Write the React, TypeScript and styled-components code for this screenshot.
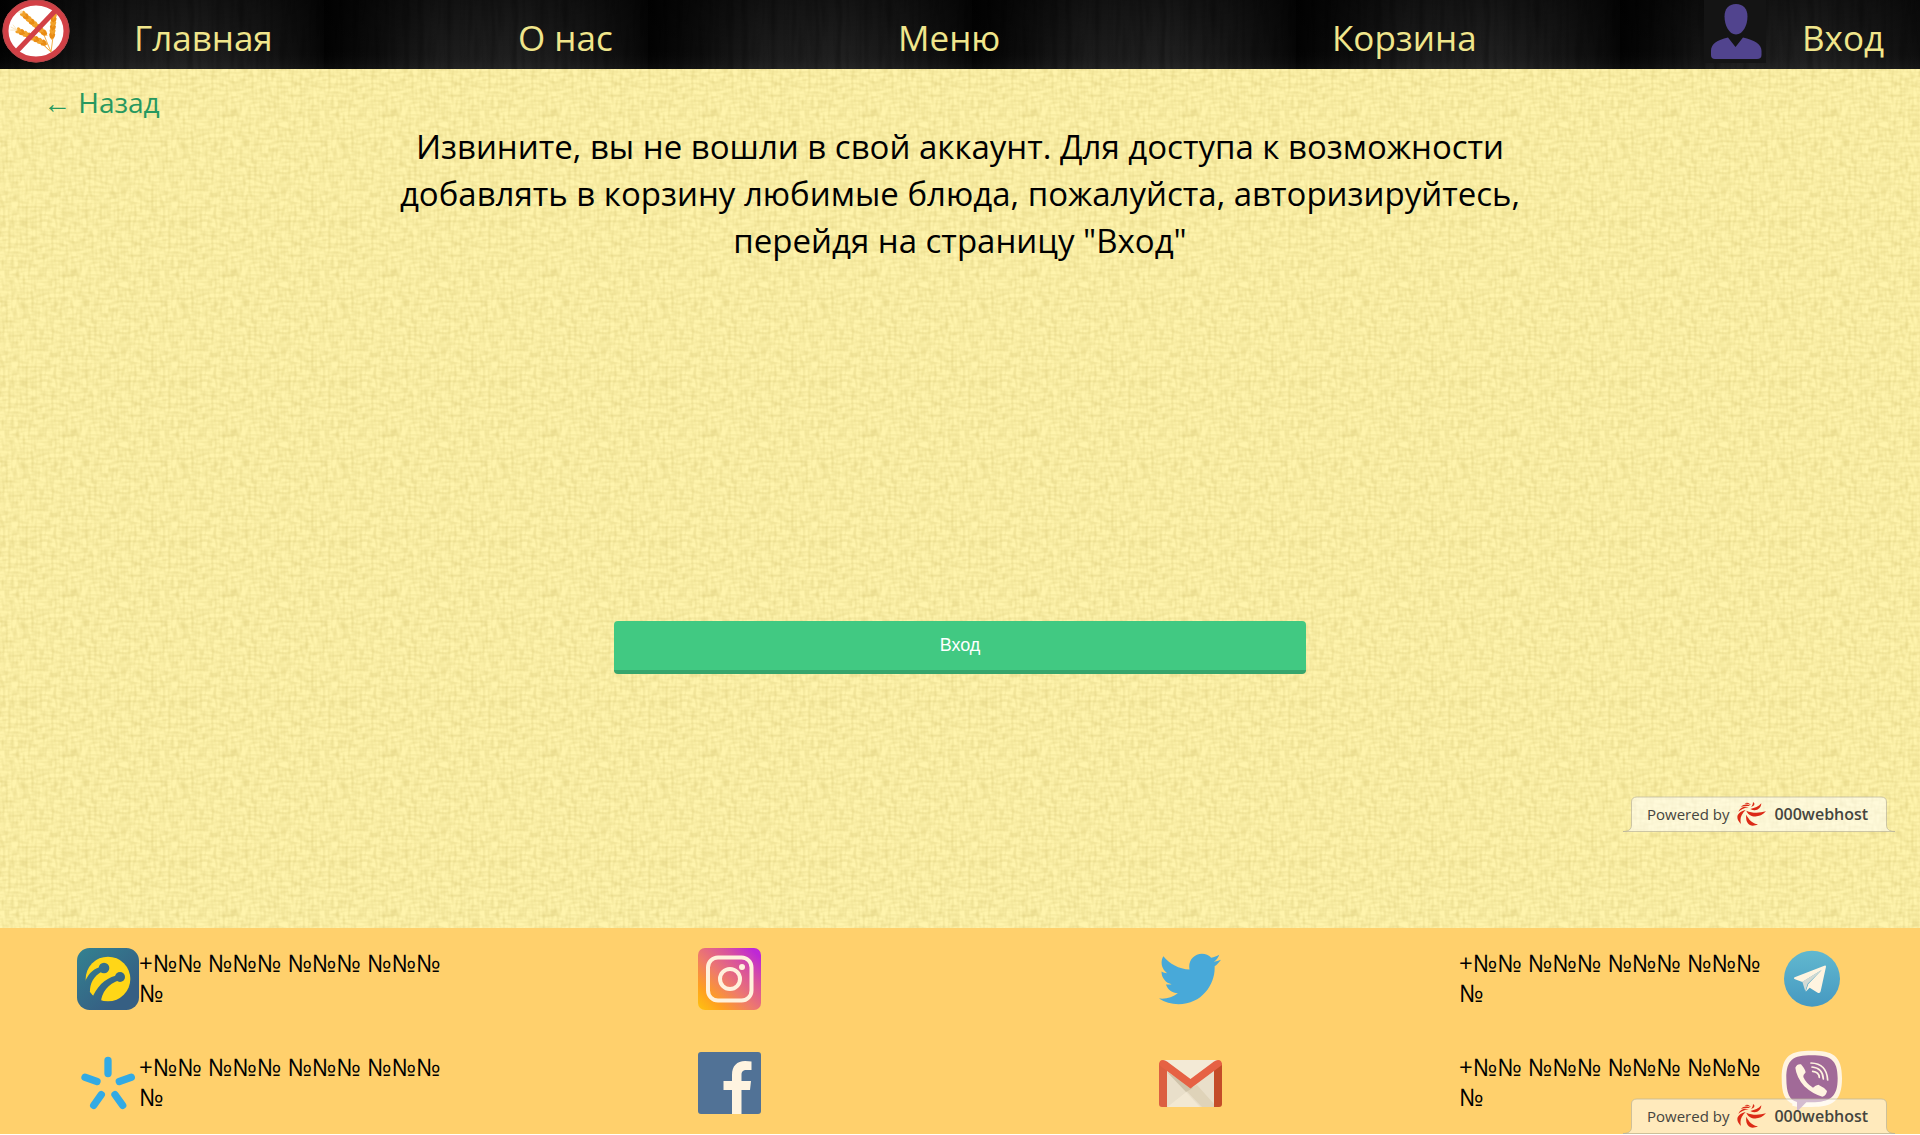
import React from "react";
import styled, { createGlobalStyle } from "styled-components";
import { FaTwitter } from "react-icons/fa";

const sans = `"Open Sans", "Noto Sans", sans-serif`;

const svgUrl = (svg: string) => `url("data:image/svg+xml,${encodeURIComponent(svg)}")`;

const canvasTexture = svgUrl(
  `<svg xmlns="http://www.w3.org/2000/svg" width="160" height="160">
  <filter id="v" x="0" y="0" width="100%" height="100%" color-interpolation-filters="sRGB">
    <feTurbulence type="fractalNoise" baseFrequency="0.35 0.1" numOctaves="1" seed="4" stitchTiles="stitch"/>
    <feColorMatrix values="0 0 0 0 .82  0 0 0 0 .75  0 0 0 0 .42  .8 0 0 0 -.32"/>
  </filter>
  <filter id="h" x="0" y="0" width="100%" height="100%" color-interpolation-filters="sRGB">
    <feTurbulence type="fractalNoise" baseFrequency="0.1 0.35" numOctaves="1" seed="9" stitchTiles="stitch"/>
    <feColorMatrix values="0 0 0 0 .82  0 0 0 0 .75  0 0 0 0 .42  .8 0 0 0 -.32"/>
  </filter>
  <rect width="160" height="160" filter="url(#v)"/><rect width="160" height="160" filter="url(#h)"/></svg>`
);

const woodTexture = svgUrl(
  `<svg xmlns="http://www.w3.org/2000/svg" width="324" height="69">
  <defs>
    <linearGradient id="g"><stop offset="0" stop-color="#020202"/><stop offset=".1" stop-color="#080808"/><stop offset=".35" stop-color="#1a1a1a"/><stop offset=".6" stop-color="#1e1e1e"/><stop offset=".8" stop-color="#161616"/><stop offset=".95" stop-color="#0b0b0b"/><stop offset="1" stop-color="#050505"/></linearGradient>
    <linearGradient id="s" x2="0" y2="1"><stop offset="0" stop-color="#000" stop-opacity=".35"/><stop offset=".7" stop-color="#000" stop-opacity="0"/><stop offset="1" stop-color="#fff" stop-opacity=".04"/></linearGradient>
  </defs>
  <filter id="w" x="0" y="0" width="100%" height="100%" color-interpolation-filters="sRGB">
    <feTurbulence type="fractalNoise" baseFrequency="0.14 0.02" numOctaves="2" seed="3" stitchTiles="stitch"/>
    <feColorMatrix values="0 0 0 0 0  0 0 0 0 0  0 0 0 0 0  .7 0 0 0 -.3"/>
  </filter>
  <rect width="324" height="69" fill="url(#g)"/><rect width="324" height="69" fill="url(#s)"/><rect width="324" height="69" filter="url(#w)"/></svg>`
);

const GlobalStyle = createGlobalStyle`
  *, *::before, *::after { box-sizing: border-box; }
  body { margin: 0; background: #fff; font-family: ${sans}; color: #000; }
  a { text-decoration: none; color: inherit; }
  svg { display: block; flex: none; }
`;

const Page = styled.div`
  min-height: calc(100vh - 1px);
  display: flex;
  flex-direction: column;
`;

const Header = styled.header`
  background: #101010 ${woodTexture} repeat-x;
`;

const Nav = styled.nav`
  display: grid;
  grid-template-columns: 134fr 384fr 380fr 434fr 372fr 216fr;
  align-items: start;
  height: 69px;
`;

const NavLink = styled.a`
  color: #f0e68c;
  font-size: 35px;
  line-height: 48px;
  padding-top: 14px;
  white-space: nowrap;
`;

const Account = styled.div`
  display: flex;
  gap: 36px;
`;

const AvatarBox = styled.span`
  background: #141414;
`;

const Main = styled.main`
  position: relative;
  flex: 1;
  background: #fff4ac ${canvasTexture};
`;

const BackLink = styled.a`
  display: inline-block;
  margin: 13px 0 1px 43px;
  color: #27985f;
  font-size: 28px;
  line-height: 40px;
`;

const Message = styled.p`
  width: 60%;
  margin: 0 auto;
  text-align: center;
  font-size: 33px;
  line-height: 47px;
`;

const LoginButton = styled.button`
  display: block;
  width: 36%;
  height: 53px;
  margin: 357px auto 254px;
  padding: 0 0 2px;
  border: 0;
  border-bottom: 4px solid #37a56c;
  border-radius: 4px;
  background: #41c982;
  color: #fff;
  font: 18px/46px "Liberation Sans", Arial, sans-serif;
`;

const Footer = styled.footer`
  position: relative;
  background: #ffd06c;
  padding: 20px 77px;
  display: grid;
  grid-template-columns: 621fr 461fr 300fr 384fr;
  row-gap: 42px;
`;

const Contact = styled.div<{ $end?: boolean }>`
  display: flex;
  align-items: flex-start;
  justify-content: ${(p) => (p.$end ? "space-between" : "flex-start")};
`;

const Phone = styled.span`
  width: 320px;
  font-size: 24px;
  line-height: 30px;
`;

const SocialLink = styled.a`
  display: flex;
  align-items: center;
  justify-content: center;
  width: 62px;
  height: 62px;
`;

const HostLink = styled.a<{ $bottom: number }>`
  position: absolute;
  right: 25px;
  bottom: ${(p) => p.$bottom}px;
  width: 272px;
  height: 36px;
  padding: 0 24px;
  display: flex;
  align-items: center;
  gap: 8px;
  color: #45453e;
  line-height: 36px;
  white-space: nowrap;
`;

const HostPlate = styled.svg`
  position: absolute;
  inset: 0;
`;

const HostText = styled.span<{ $brand?: boolean }>`
  position: relative;
  font-size: ${(p) => (p.$brand ? 16 : 15)}px;
  font-weight: ${(p) => (p.$brand ? 600 : 400)};
`;

const HostSwirl = styled.svg`
  position: relative;
`;

function WheatEar({ x, y, angle, count }: { x: number; y: number; angle: number; count: number }) {
  return (
    <g transform={`translate(${x} ${y}) rotate(${angle})`}>
      <path d={`M0 0H${count * 4 + 2}`} stroke="#f3b04a" strokeWidth="1" />
      <path d="M0 0l-6-3M0 0l-7 0M0 0l-6 3" stroke="#f8dfb0" strokeWidth=".7" />
      {Array.from({ length: count }, (_, i) => (
        <g key={i} fill={i % 2 ? "#e98c14" : "#f2a22a"}>
          <ellipse cx={i * 4 + 2} cy="-1.2" rx="3" ry="1.5" transform={`rotate(20 ${i * 4 + 2} -1.2)`} />
          <ellipse cx={i * 4 + 2} cy="1.2" rx="3" ry="1.5" transform={`rotate(-20 ${i * 4 + 2} 1.2)`} />
        </g>
      ))}
    </g>
  );
}

const Logo = () => (
  <svg width="72" height="64" viewBox="0 0 72 64" fill="none" role="img" aria-label="Без глютена">
    <ellipse cx="36" cy="31" rx="30" ry="28" fill="#fff" />
    <path d="M44 35L51 52M44 45L51 52M53 37L51 52M38 40L51 52" stroke="#f3b04a" />
    <WheatEar x={22} y={13} angle={42} count={8} />
    <WheatEar x={17} y={30} angle={26} count={8} />
    <WheatEar x={54} y={14} angle={95} count={6} />
    <path d="M55 11L17 51" stroke="#d24046" strokeWidth="5" />
    <ellipse cx="36" cy="31" rx="30.5" ry="28.5" stroke="#d24046" strokeWidth="6" />
    <ellipse cx="36" cy="31" rx="33" ry="31" stroke="#b5494c" strokeWidth="1" />
  </svg>
);

const UserIcon = () => (
  <svg width="62" height="63" viewBox="0 0 62 63" fill="#51448e" aria-hidden="true">
    <path d="M32 4C24.500 4 20.500 9 20.500 16.500C20.500 25 25 34.500 32 34.500C39 34.500 43.500 25 43.500 16.500C43.500 9 39.500 4 32 4Z" />
    <path d="M24 37.500L31.500 47L39 37.500C50 40 57.500 44 57.500 51V55Q57.500 59 53 59H11Q7 59 7 55V51C7 44 13 40 24 37.500Z" />
  </svg>
);

const LifecellIcon = () => (
  <svg width="62" height="62" viewBox="0 0 186 186" aria-hidden="true">
    <defs>
      <linearGradient id="life" gradientUnits="userSpaceOnUse" x1="0" y1="0" x2="130" y2="150">
        <stop offset="0" stopColor="#338291" />
        <stop offset="1" stopColor="#365f83" />
      </linearGradient>
    </defs>
    <rect width="186" height="186" rx="38" fill="url(#life)" />
    <circle cx="93" cy="93" r="67" fill="#ffd617" />
    <g fill="url(#life)">
      <circle cx="81" cy="60" r="16" />
      <path d="M76 56C52 58 36 76 26 96L18 120L39 132C38 108 50 84 76 70Z" />
      <circle cx="129" cy="87" r="15" />
      <path d="M128 82C94 84 66 108 49 142L44 165L72 162C74 134 92 108 128 96Z" />
    </g>
  </svg>
);

const KyivstarIcon = () => (
  <svg width="62" height="62" viewBox="0 0 62 62" stroke="#32aae4" strokeWidth="7.300" strokeLinecap="round" aria-hidden="true">
    <path d="M31 8.500V21.500M8 25.300L20 29.500M42.300 29.500L54.300 25.300M24.300 42.700L16.700 53.300M38 42.700L45.700 53.300" />
  </svg>
);

const InstagramIcon = () => (
  <svg width="63" height="62" viewBox="0 0 63 62" fill="none" aria-hidden="true">
    <defs>
      <linearGradient id="insta" x1="0" y1="1" x2="1" y2="0">
        <stop offset="0" stopColor="#ffc40f" />
        <stop offset=".2" stopColor="#ffa01f" />
        <stop offset=".45" stopColor="#ee7a6c" />
        <stop offset=".7" stopColor="#d9539c" />
        <stop offset=".92" stopColor="#be28d6" />
      </linearGradient>
    </defs>
    <rect width="63" height="62" rx="7" fill="url(#insta)" />
    <g stroke="#fff1dc" strokeWidth="4">
      <rect x="10" y="9.500" width="43.500" height="43" rx="10" />
      <circle cx="32" cy="31" r="10" />
    </g>
    <circle cx="44" cy="19" r="3" fill="#fff1dc" />
  </svg>
);

const FacebookIcon = () => (
  <svg width="63" height="62" viewBox="0 0 63 62" aria-hidden="true">
    <rect width="63" height="62" rx="3" fill="#517296" />
    <path d="M34 62V38H25.500V29H34V23C34 14 39 9 47 9Q51 9 53.500 9.500V18H48.500C45 18 43.500 19.500 43.500 23V29H53L52 38H43.500V62Z" fill="#fff4e0" />
  </svg>
);

const GmailIcon = () => (
  <svg width="63" height="62" viewBox="0 0 63 62" aria-hidden="true">
    <rect x="3" y="8" width="57" height="47" rx="2" fill="#e9dfca" />
    <path d="M5 8H58L31.500 29Z" fill="#f3ead6" />
    <path d="M8 19L31 36L38 33L55 52V55H43Z" fill="#dfd3b9" />
    <path d="M8 55L27 40L41 55Z" fill="#f2e8d3" />
    <path d="M8 20L27 40L8 55Z" fill="#e9dfca" />
    <path d="M8 20L27 40L34 36L31 34Z" fill="#cfc3aa" />
    <path d="M0 11L8 18V55H3Q0 55 0 52Z" fill="#dc5f41" />
    <path d="M63 11L55 18V55H60Q63 55 63 52Z" fill="#c44c28" />
    <path d="M0 13Q0 8 4 8Q6 8 8 9.500L31.500 27L55 9.500Q57 8 59 8Q63 8 63 13L31.500 36.500Z" fill="#e66144" />
  </svg>
);

const TelegramIcon = () => (
  <svg width="62" height="62" viewBox="0 0 186 186" aria-hidden="true">
    <defs>
      <linearGradient id="tg" x1="0" y1="0" x2="0" y2="1">
        <stop offset="0" stopColor="#61b8cf" />
        <stop offset="1" stopColor="#4699c1" />
      </linearGradient>
    </defs>
    <circle cx="93" cy="92" r="84" fill="url(#tg)" />
    <path d="M41 88Q36 92 42 94L64 102L122 66L82 108L74 131L86 119L110 134Q117 138 119 130L135 56Q135 51 130 53Z" fill="#fff4e0" />
    <path d="M64 101L122 66L80 107L73 130Z" fill="#d3dad4" />
  </svg>
);

const ViberIcon = () => (
  <svg width="62" height="62" viewBox="0 5 186 186" overflow="visible" fill="none" aria-hidden="true">
    <path d="M92 1C30 1 2 14 2 84C2 132 12 150 34 160V166L50 170H92C154 170 183 154 183 84C183 14 154 1 92 1Z" fill="#fff4e0" />
    <path d="M92 15C36 15 16 28 16 84C16 130 26 150 48 155V184L76 156H92C148 156 170 140 170 84C170 28 148 15 92 15Z" fill="#a16a98" />
    <path d="M43 52Q48 40 60 42Q72 56 74 66Q66 74 67 80Q76 100 96 112Q104 104 112 103Q128 110 138 122Q136 136 124 139Q96 132 70 108Q46 80 43 52Z" fill="#fff4e0" />
    <path d="M90 38C120 39 138 56 140 89M93 50C114 52 126 64 127 86M95 63C107 64 114 70 115 81" stroke="#fff4e0" strokeWidth="5" strokeLinecap="round" />
  </svg>
);

function PoweredBy({ bottom }: { bottom: number }) {
  return (
    <HostLink href="#host" $bottom={bottom}>
      <HostPlate width="272" height="36" viewBox="0 0 272 36" aria-hidden="true">
        <path
          d="M0 35.500C6 35.500 8.500 33 8.500 29V6Q8.500 1 14 1H258Q263.500 1 263.500 6V29C263.500 33 266 35.500 272 35.500Z"
          fill="#fff"
          fillOpacity=".55"
          stroke="#b9b39a"
          strokeOpacity=".7"
        />
      </HostPlate>
      <HostText>Powered by</HostText>
      <HostSwirl width="29" height="24" viewBox="0 0 87 72" fill="#dc2a16" aria-hidden="true">
        <path d="M28 38C24 62 38 80 63 67C46 64 36 54 28 38Z" />
        <path d="M28 26C36 48 68 50 87 28C66 34 46 34 28 26Z" />
        <path d="M40 21C56 30 72 22 73 4C64 14 54 18 40 21Z" />
        <path d="M12 66C-6 50 -2 30 26 24C12 38 8 48 12 66Z" />
        <path d="M42 15C52 12 56 5 48 0C48 7 46 11 42 15Z" />
        <path d="M4 29C10 16 22 12 35 16C22 18 14 21 4 29ZM12 15C20 6 31 6 39 12C30 12 22 11 12 15ZM23 5C30 0 37 3 42 10C36 6 30 5 23 5Z" />
      </HostSwirl>
      <HostText $brand>000webhost</HostText>
    </HostLink>
  );
}

const PHONE = "+№№ №№№ №№№ №№№ №";

export default function App() {
  return (
    <Page>
      <GlobalStyle />
      <Header>
        <Nav aria-label="Основная навигация">
          <a href="#home"><Logo /></a>
          <NavLink href="#main">Главная</NavLink>
          <NavLink href="#about">О нас</NavLink>
          <NavLink href="#menu">Меню</NavLink>
          <NavLink href="#cart">Корзина</NavLink>
          <Account>
            <AvatarBox><UserIcon /></AvatarBox>
            <NavLink href="#login">Вход</NavLink>
          </Account>
        </Nav>
      </Header>
      <Main>
        <BackLink href="#back">← Назад</BackLink>
        <Message>
          Извините, вы не вошли в свой аккаунт. Для доступа к возможности добавлять в корзину
          любимые блюда, пожалуйста, авторизируйтесь, перейдя на страницу "Вход"
        </Message>
        <LoginButton type="button">Вход</LoginButton>
        <PoweredBy bottom={96} />
      </Main>
      <Footer>
        <Contact><LifecellIcon /><Phone>{PHONE}</Phone></Contact>
        <SocialLink href="#instagram" aria-label="Instagram"><InstagramIcon /></SocialLink>
        <SocialLink href="#twitter" aria-label="Twitter"><FaTwitter size={62} color="#48a9d9" /></SocialLink>
        <Contact $end><Phone>{PHONE}</Phone><TelegramIcon /></Contact>
        <Contact><KyivstarIcon /><Phone>{PHONE}</Phone></Contact>
        <SocialLink href="#facebook" aria-label="Facebook"><FacebookIcon /></SocialLink>
        <SocialLink href="#gmail" aria-label="Gmail"><GmailIcon /></SocialLink>
        <Contact $end><Phone>{PHONE}</Phone><ViberIcon /></Contact>
        <PoweredBy bottom={0} />
      </Footer>
    </Page>
  );
}
